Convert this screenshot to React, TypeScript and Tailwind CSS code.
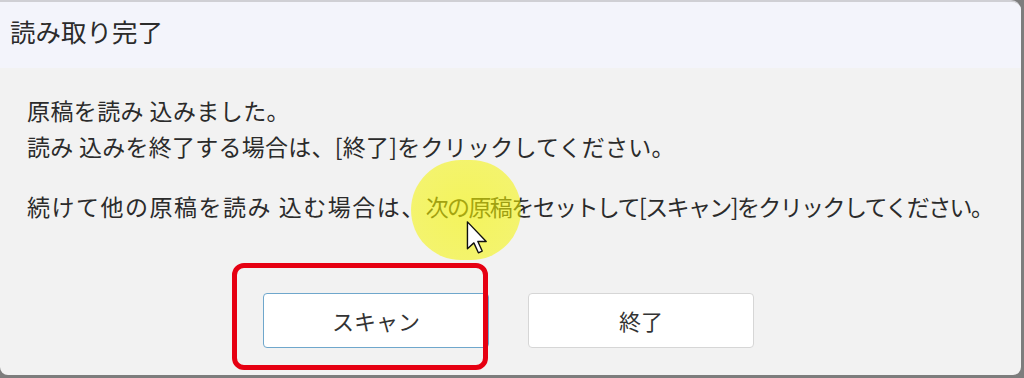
import React from "react";

// Scan finished dialog (Windows style), with the tutorial annotations on top

function Cursor() {
  return (
    <svg
      width="22"
      height="33"
      viewBox="0 0 12 19"
      className="absolute left-[466px] top-[221px]"
    >
      <path
        d="M0.5 0.5 L0.5 16 L4.2 12.6 L6.8 18.3 L9 17.3 L6.5 11.8 L11.3 11.8 Z"
        fill="#ffffff"
        stroke="#111111"
        strokeWidth="0.8"
        strokeLinejoin="round"
      />
    </svg>
  );
}

export default function App() {
  return (
    <div className="relative h-[378px] w-[1024px] overflow-hidden bg-[#7d7d7d] font-['Noto_Sans_CJK_JP',sans-serif] text-[#2b2b2b]">
      <div className="flex h-[375px] w-[1021px] flex-col overflow-hidden rounded-tr-[10px] rounded-br-[8px] rounded-bl-[8px] border-t-2 border-[#cfcfd4] bg-[#f2f2f2]">
        {/* title bar */}
        <div className="flex h-[66px] shrink-0 items-center bg-[#f3f4fb] pb-[8px] pl-[10px] text-[25.5px] leading-none">
          読み取り完了
        </div>

        {/* message */}
        <div className="pl-[27px] pt-[24px] text-[23px] leading-[36px]">
          <p className="tracking-[0.4px]">原稿を読み 込みました。</p>
          <p className="tracking-[0.25px]">
            読み 込みを終了する場合は、[終了]をクリックしてください。
          </p>
          <p className="mt-[24px]">
            <span className="tracking-[1.5px]">続けて他の原稿を読み 込む場合は、</span>
            <span className="tracking-[-1.6px]">
              次の原稿をセットして[スキャン]をクリックしてください。
            </span>
          </p>
        </div>

        {/* buttons */}
        <div className="mt-[69px] flex gap-[39px] pl-[263px]">
          <button className="h-[55px] w-[226px] rounded-[4px] border border-[#6fa7cc] bg-white text-[22px] text-[#333]">
            スキャン
          </button>
          <button className="h-[55px] w-[226px] rounded-[4px] border border-[#d6d6d6] bg-white text-[22px] text-[#333]">
            終了
          </button>
        </div>
      </div>

      {/* annotations */}
      <div className="pointer-events-none absolute left-[411px] top-[160px] h-[100px] w-[110px] rounded-full bg-[radial-gradient(circle,rgba(245,245,0,0.62)_0%,rgba(245,245,0,0.55)_72%,rgba(245,245,0,0)_100%)]" />
      <div className="pointer-events-none absolute left-[232px] top-[263px] h-[107px] w-[256px] rounded-[12px] border-[5px] border-[#e60012]" />
      <Cursor />
    </div>
  );
}
